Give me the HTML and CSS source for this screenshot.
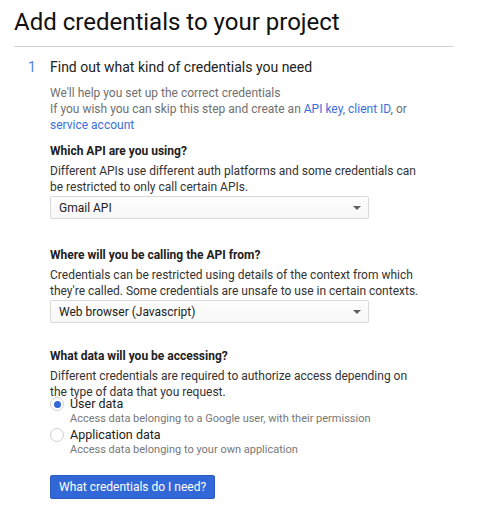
FILE: index.html
```html
<!DOCTYPE html>
<html>
<head>
<meta charset="utf-8">
<link rel="stylesheet" href="styles.css">
</head>
<body>
<div class="page">
  <h1 class="title">Add credentials to your project</h1>
  <div class="divider"></div>
  <div class="step">
    <div class="step-num">1</div>
    <div class="step-body">
      <h2 class="step-title">Find out what kind of credentials you need</h2>
      <p class="intro">We'll help you set up the correct credentials<br>If you wish you can skip this step and create an <a href="#">API key</a>, <a href="#">client ID</a>, or <a href="#">service account</a></p>

      <div class="field">
        <h3 class="field-label">Which API are you using?</h3>
        <p class="field-desc">Different APIs use different auth platforms and some credentials can be restricted to only call certain APIs.</p>
        <div class="select"><span>Gmail API</span><span class="caret"></span></div>
      </div>

      <div class="field">
        <h3 class="field-label">Where will you be calling the API from?</h3>
        <p class="field-desc">Credentials can be restricted using details of the context from which they're called. Some credentials are unsafe to use in certain contexts.</p>
        <div class="select"><span>Web browser (Javascript)</span><span class="caret"></span></div>
      </div>

      <div class="field field-data">
        <h3 class="field-label">What data will you be accessing?</h3>
        <p class="field-desc">Different credentials are required to authorize access depending on the type of data that you request.</p>
        <div class="radios">
          <div class="radio">
            <span class="radio-dot checked"></span>
            <div class="radio-text">
              <div class="radio-label">User data</div>
              <div class="radio-sub">Access data belonging to a Google user, with their permission</div>
            </div>
          </div>
          <div class="radio">
            <span class="radio-dot"></span>
            <div class="radio-text">
              <div class="radio-label">Application data</div>
              <div class="radio-sub">Access data belonging to your own application</div>
            </div>
          </div>
        </div>
      </div>

      <button class="primary">What credentials do I need?</button>
    </div>
  </div>
</div>
</body>
</html>
```

FILE: styles.css
```css
* { box-sizing: border-box; }
body {
  margin: 0;
  background: #fff;
  font-family: Roboto, "Liberation Sans", Arial, sans-serif;
  color: #212121;
}
.page {
  padding: 8px 40px 0 14px;
}
.title {
  margin: 0;
  font-size: 24px;
  line-height: 28px;
  font-weight: 400;
  color: #111;
}
.divider {
  margin-top: 10px;
  height: 1px;
  background: #d4d4d4;
}
.step {
  display: flex;
  margin-top: 10px;
}
.step-num {
  flex: none;
  width: 36px;
  padding-left: 14px;
  font-size: 14px;
  line-height: 20px;
  color: #4f82e6;
}
.step-body {
  flex: none;
  width: 370px;
}
.step-title {
  margin: 0;
  font-size: 14px;
  line-height: 20px;
  font-weight: 400;
  color: #212121;
}
.intro {
  margin: 8px 0 0;
  font-size: 12px;
  line-height: 16px;
  color: #707070;
}
.intro a {
  color: #3a6fd8;
  text-decoration: none;
}
.field {
  margin-top: 10px;
}
.field + .field {
  margin-top: 28px;
}
.field + .field-data {
  margin-top: 25px;
}
.field-label {
  margin: 0;
  font-size: 12px;
  line-height: 16px;
  font-weight: 700;
  color: #212121;
}
.field-desc {
  margin: 4px 0 0;
  font-size: 12px;
  line-height: 16px;
  color: #333;
}
.select {
  margin-top: 1px;
  width: 319px;
  height: 23px;
  border: 1px solid #d9d9d9;
  border-radius: 2px;
  background: linear-gradient(#fdfdfd, #f8f8f8);
  display: flex;
  align-items: center;
  justify-content: space-between;
  padding: 0 7px 0 8px;
  font-size: 12px;
  color: #212121;
}
.caret {
  width: 0;
  height: 0;
  border-left: 4px solid transparent;
  border-right: 4px solid transparent;
  border-top: 4px solid #5f5f5f;
}
.radios {
  margin-top: -3px;
  display: flex;
  flex-direction: column;
  gap: 1px;
}
.radio {
  display: flex;
  gap: 6px;
}
.radio-dot {
  flex: none;
  width: 14px;
  height: 14px;
  margin-top: 0;
  border-radius: 50%;
  border: 1px solid #d0d0d0;
  background: #fff;
  position: relative;
}
.radio-dot.checked::after {
  content: "";
  position: absolute;
  left: 2.5px;
  top: 2.5px;
  width: 7px;
  height: 7px;
  border-radius: 50%;
  background: #3367d6;
}
.radio-label {
  font-size: 12.5px;
  line-height: 14px;
  color: #212121;
}
.radio-sub {
  font-size: 11px;
  line-height: 16px;
  color: #777;
}
.primary {
  margin-top: 17px;
  height: 24px;
  padding: 0 8px;
  border: 1px solid #2c5bc4;
  border-radius: 2px;
  background: #3167d7;
  color: #fff;
  font-family: Roboto, "Liberation Sans", Arial, sans-serif;
  font-size: 12px;
  line-height: 22px;
}
```
